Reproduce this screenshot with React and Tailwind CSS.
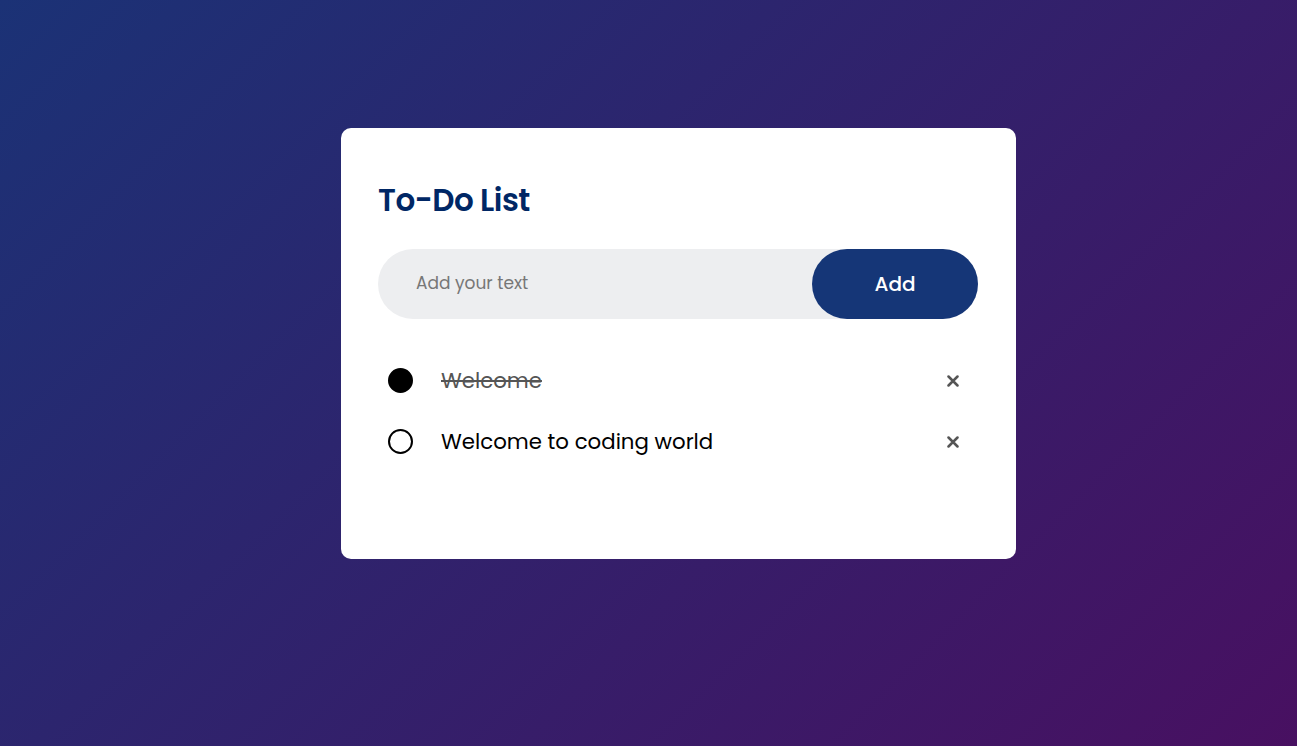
import { useState } from 'react'

const FONT = { fontFamily: '"Poppins", Inter, "Noto Sans", sans-serif' }

export default function App() {
  const [text, setText] = useState('')
  const [tasks, setTasks] = useState([
    { id: 1, label: 'Welcome', done: true },
    { id: 2, label: 'Welcome to coding world', done: false },
  ])

  const addTask = () => {
    if (!text.trim()) return
    setTasks([...tasks, { id: Date.now(), label: text, done: false }])
    setText('')
  }

  return (
    <div
      className="w-full h-[746px] overflow-hidden bg-[linear-gradient(135deg,#1b3276,#481061)] pt-[128px]"
      style={FONT}
    >
      <div className="ml-[341px] w-[675px] h-[431px] bg-white rounded-[10px] pl-[37px] pr-[38px] pt-[50px]">
        <h2 className="text-[31px] leading-[44px] font-semibold tracking-[-0.5px] text-[#002765] mb-[27px]">
          To-Do List
        </h2>

        <div className="flex items-center bg-[#edeef0] rounded-full h-[70px] pl-[38px]">
          <input
            type="text"
            value={text}
            onChange={(e) => setText(e.target.value)}
            placeholder="Add your text"
            className="flex-1 bg-transparent outline-none text-[17px] text-[#555] placeholder:text-[#777]"
          />
          <button
            onClick={addTask}
            className="h-[70px] w-[166px] rounded-full bg-[#153677] text-white text-[20px] font-medium"
          >
            Add
          </button>
        </div>

        <ul className="mt-[31px]">
          {tasks.map((t) => (
            <li key={t.id} className="flex items-center h-[61px] pl-[10px]">
              <button
                onClick={() =>
                  setTasks(tasks.map((x) => (x.id === t.id ? { ...x, done: !x.done } : x)))
                }
                className={`w-[25px] h-[25px] rounded-full shrink-0 border-2 border-black ${t.done ? 'bg-black' : 'bg-white'}`}
              />
              <span
                className={`ml-[28px] flex-1 text-[21.3px] ${t.done ? 'line-through text-[#555]' : 'text-black'}`}
              >
                {t.label}
              </span>
              <button
                onClick={() => setTasks(tasks.filter((x) => x.id !== t.id))}
                className="w-10 h-10 mr-[5px] flex items-center justify-center text-[#555]"
              >
                <svg width="12" height="12" viewBox="0 0 12 12">
                  <path d="M1.5 1.5 L10.5 10.5 M10.5 1.5 L1.5 10.5" stroke="#555" strokeWidth="2.5" strokeLinecap="round" />
                </svg>
              </button>
            </li>
          ))}
        </ul>
      </div>
    </div>
  )
}
